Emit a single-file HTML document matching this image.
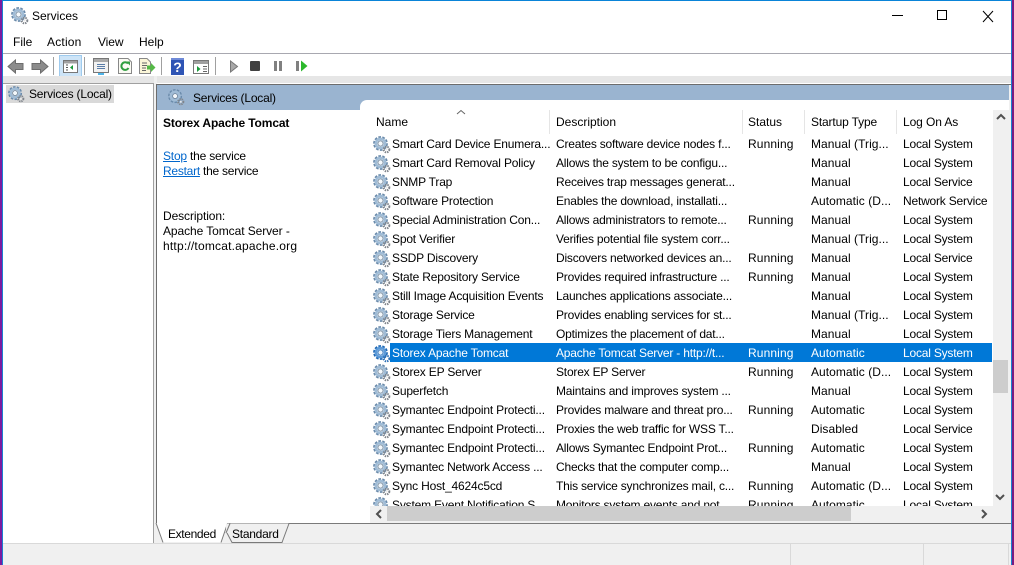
<!DOCTYPE html>
<html><head><meta charset="utf-8"><style>
html,body{margin:0;padding:0}
body{width:1014px;height:565px;position:relative;overflow:hidden;background:#fff;font:12px/17px "Liberation Sans",sans-serif;color:#000}
div,span,a,svg{position:absolute;display:block}
.t{white-space:nowrap}
.r{left:370px;width:622px;height:19px}
.r span{top:2px;white-space:nowrap}
.r svg{left:3px;top:2px}
.n{left:22px;letter-spacing:-.18px}.d{left:186px;letter-spacing:-.2px}.s{left:378px;letter-spacing:.12px}.u{left:441px;letter-spacing:.05px}.l{left:533px;letter-spacing:-.2px}
.sel{background:#0078d7;color:#fff;left:390px;width:602px;top:0;height:19px}
.h{top:114px;white-space:nowrap}
.dv{top:110px;width:1px;height:24px;background:#e5e5e5}
a{color:#0066cc;text-decoration:underline;position:static;display:inline}
</style></head><body>
<svg width="0" height="0" style="left:0;top:0"><defs>
<symbol id="g" viewBox="0 0 18 18">
<circle cx="7.500" cy="7.500" r="5.800" fill="none" stroke="#6a8aaa" stroke-width="3.200" stroke-dasharray="2.400 1.200"/>
<circle cx="7.500" cy="7.500" r="4.600" fill="none" stroke="#a0bcd6" stroke-width="2.600"/>
<circle cx="7.500" cy="7.500" r="2.600" fill="#f4f8fb" stroke="#6f8499" stroke-width=".8"/>
<circle cx="13.500" cy="13.500" r="2.800" fill="none" stroke="#7f848b" stroke-width="2" stroke-dasharray="1.400 .9"/>
<circle cx="13.500" cy="13.500" r="1" fill="#e8e8e8"/>
</symbol>
<symbol id="gs" viewBox="0 0 18 18">
<circle cx="7.500" cy="7.500" r="5.800" fill="none" stroke="#1f68b4" stroke-width="3.200" stroke-dasharray="2.400 1.200"/>
<circle cx="7.500" cy="7.500" r="4.600" fill="none" stroke="#5c9ad8" stroke-width="2.600"/>
<circle cx="7.500" cy="7.500" r="2.600" fill="#e8f2fb" stroke="#1f68b4" stroke-width=".8"/>
<circle cx="13.500" cy="13.500" r="2.800" fill="none" stroke="#2c6fb5" stroke-width="2" stroke-dasharray="1.400 .9"/>
</symbol>
</defs></svg>

<!-- window frame -->
<div style="left:0;top:0;width:1014px;height:1px;background:#0a84d8"></div>
<div style="left:0;top:0;width:2px;height:565px;background:#7a1aa0"></div>
<div style="left:2px;top:0;width:1px;height:565px;background:#1a7fd0"></div>
<div style="left:1011px;top:0;width:1px;height:565px;background:#1a7fd0"></div>
<div style="left:1012px;top:0;width:2px;height:565px;background:#7a1a80"></div>

<!-- title bar -->
<svg style="left:11px;top:7px" width="18" height="18"><use href="#g"/></svg>
<div class="t" style="left:32px;top:8px">Services</div>
<svg style="left:890px;top:8px" width="105" height="16" fill="none" stroke="#000" stroke-width="1">
<path d="M2 7.500H13"/><rect x="47.500" y="2.500" width="9" height="9"/><path d="M93 3L103 14M103 3L93 14"/></svg>

<!-- menu -->
<div class="t" style="left:13px;top:34px">File</div>
<div class="t" style="left:47px;top:34px;letter-spacing:.2px">Action</div>
<div class="t" style="left:98px;top:34px;letter-spacing:-.1px">View</div>
<div class="t" style="left:139px;top:34px">Help</div>
<div style="left:3px;top:53px;width:1008px;height:1px;background:#a8a8b0"></div>

<!-- toolbar -->
<svg style="left:7px;top:58px" width="42" height="17">
<path d="M1 8.500L8.500 2V5.500H16V11.500H8.500V15Z" fill="#8c8c8c" stroke="#6d6d6d"/>
<path d="M41 8.500L33.500 2V5.500H25V11.500H33.500V15Z" fill="#8c8c8c" stroke="#6d6d6d"/></svg>
<div style="left:53px;top:57px;width:1px;height:18px;background:#a0a0a0"></div>
<div style="left:59px;top:55px;width:21px;height:20px;background:#cde4f7;border:1px solid #9fcbee"></div>
<svg style="left:63px;top:60px" width="16" height="14">
<rect x=".5" y=".5" width="14" height="12" fill="#fff" stroke="#777"/><rect x="1" y="1" width="13" height="2.500" fill="#a0a0a0"/>
<path d="M10 5V10L7 7.500Z" fill="#1a9a3a"/><path d="M3 5H5M3 7.500H5M3 10H5" stroke="#555"/></svg>
<div style="left:84px;top:57px;width:1px;height:18px;background:#a0a0a0"></div>
<svg style="left:93px;top:58px" width="16" height="17">
<rect x=".5" y=".5" width="15" height="14" fill="#f2f2f2" stroke="#777"/><rect x="1" y="1" width="14" height="3" fill="#aaa"/>
<path d="M4 6.500H12M4 8.500H12M4 10.500H12" stroke="#5a7da8"/><rect x="5" y="15" width="6" height="2" fill="#4fb4e8"/></svg>
<svg style="left:118px;top:58px" width="14" height="16">
<path d="M.5.5H10L13.500 4V15.500H.5Z" fill="#fbfbf4" stroke="#888"/>
<path d="M10 5.500A3.800 3.800 0 1 0 10.500 10" fill="none" stroke="#2f9e3f" stroke-width="2"/><path d="M8 3.500L12 3.500V7.500Z" fill="#2f9e3f"/></svg>
<svg style="left:139px;top:58px" width="17" height="16">
<path d="M.5.5H8L11.500 4V15.500H.5Z" fill="#fbf6d8" stroke="#888"/><path d="M3 5H8M3 7.500H8M3 10H7M3 12.500H7" stroke="#666"/>
<path d="M8 7.500H12V5L16.500 9.500L12 14V11.500H8Z" fill="#55b947"/></svg>
<div style="left:161px;top:57px;width:1px;height:18px;background:#a0a0a0"></div>
<svg style="left:171px;top:58px" width="14" height="17"><rect width="13" height="17" fill="#2f55b5"/><rect x="0" y="0" width="13" height="2" fill="#6f8ad8"/><text x="6.500" y="14" font-family="Liberation Sans" font-weight="bold" font-size="14" fill="#fff" text-anchor="middle">?</text></svg>
<svg style="left:193px;top:60px" width="16" height="14">
<rect x=".5" y=".5" width="15" height="13" fill="#fff" stroke="#777"/><rect x="1" y="1" width="14" height="3" fill="#a0a0a0"/>
<path d="M4 6V12L7.500 9Z" fill="#1a9a3a"/><path d="M10 6.500H14M10 9H14M10 11.500H14" stroke="#666"/></svg>
<div style="left:215px;top:57px;width:1px;height:18px;background:#a0a0a0"></div>
<svg style="left:229px;top:60px" width="10" height="13"><path d="M1.500 1V12L8.500 6.500Z" fill="#a8a8a8" stroke="#777"/></svg>
<div style="left:250px;top:61px;width:10px;height:10px;background:#404040;border-radius:1px"></div>
<div style="left:274px;top:61px;width:3px;height:10px;background:#808080"></div>
<div style="left:279px;top:61px;width:3px;height:10px;background:#808080"></div>
<svg style="left:296px;top:60px" width="12" height="13"><rect x="0" y="1" width="3" height="10" fill="#808080"/><path d="M5 .5V11.500L11.500 6Z" fill="#2cb82c"/></svg>

<!-- gray gutter -->
<div style="left:3px;top:76px;width:1008px;height:7px;background:#e6e6e6"></div>
<div style="left:154px;top:76px;width:3px;height:450px;background:#f0f0f0"></div>

<!-- left tree -->
<div style="left:3px;top:83px;width:150px;height:459px;background:#fff;border:solid #a0a0a0;border-width:1px 1px 1px 0"></div>
<div style="left:6px;top:85px;width:108px;height:18px;background:#d9d9d9"></div>
<svg style="left:8px;top:86px" width="17" height="17"><use href="#g"/></svg>
<div class="t" style="left:29px;top:86px;letter-spacing:-.2px">Services (Local)</div>

<!-- middle panel -->
<div style="left:156px;top:84px;width:855px;height:439px;background:#fff"></div>
<div style="left:156px;top:84px;width:855px;height:1px;background:#6d6d6d"></div>
<div style="left:156px;top:84px;width:1px;height:439px;background:#6d6d6d"></div>
<div style="left:157px;top:85px;width:852px;height:25px;background:#9ab4d0"></div>
<svg style="left:168px;top:89px" width="17" height="17"><use href="#g"/></svg>
<div class="t" style="left:193px;top:90px;letter-spacing:-.2px">Services (Local)</div>
<div style="left:360px;top:100px;width:649px;height:30px;background:#fff;border-radius:7px 0 0 0"></div>
<div style="left:1009px;top:85px;width:2px;height:438px;background:#f0f0f0"></div>

<div class="t" style="left:163px;top:115px;font-weight:bold;letter-spacing:-.12px">Storex Apache Tomcat</div>
<div class="t" style="left:163px;top:148px;letter-spacing:-.2px"><a>Stop</a> the service</div>
<div class="t" style="left:163px;top:163px;letter-spacing:-.25px"><a>Restart</a> the service</div>
<div class="t" style="left:163px;top:208px;letter-spacing:-.1px">Description:</div>
<div class="t" style="left:163px;top:223px;letter-spacing:-.08px">Apache Tomcat Server -</div>
<div class="t" style="left:163px;top:238px;letter-spacing:.2px">http://tomcat.apache.org</div>

<!-- list header -->
<div class="h" style="left:376px">Name</div>
<div class="h" style="left:556px">Description</div>
<div class="h" style="left:748px">Status</div>
<div class="h" style="left:811px;letter-spacing:-.15px">Startup Type</div>
<div class="h" style="left:903px;letter-spacing:-.1px">Log On As</div>
<div class="dv" style="left:549px"></div><div class="dv" style="left:742px"></div><div class="dv" style="left:804px"></div><div class="dv" style="left:896px"></div>
<svg style="left:456px;top:109px" width="10" height="6" fill="none" stroke="#666"><path d="M1 5L5 1.500L9 5"/></svg>

<!-- rows -->
<div style="left:370px;top:134px;width:622px;height:372px;overflow:hidden">
<div class="r" style="left:0;top:0"><svg width="18" height="18"><use href="#g"/></svg><span class="n">Smart Card Device Enumera...</span><span class="d">Creates software device nodes f...</span><span class="s">Running</span><span class="u">Manual (Trig...</span><span class="l">Local System</span></div>
<div class="r" style="left:0;top:19px"><svg width="18" height="18"><use href="#g"/></svg><span class="n">Smart Card Removal Policy</span><span class="d">Allows the system to be configu...</span><span class="u">Manual</span><span class="l">Local System</span></div>
<div class="r" style="left:0;top:38px"><svg width="18" height="18"><use href="#g"/></svg><span class="n">SNMP Trap</span><span class="d">Receives trap messages generat...</span><span class="u">Manual</span><span class="l">Local Service</span></div>
<div class="r" style="left:0;top:57px"><svg width="18" height="18"><use href="#g"/></svg><span class="n">Software Protection</span><span class="d">Enables the download, installati...</span><span class="u">Automatic (D...</span><span class="l">Network Service</span></div>
<div class="r" style="left:0;top:76px"><svg width="18" height="18"><use href="#g"/></svg><span class="n">Special Administration Con...</span><span class="d">Allows administrators to remote...</span><span class="s">Running</span><span class="u">Manual</span><span class="l">Local System</span></div>
<div class="r" style="left:0;top:95px"><svg width="18" height="18"><use href="#g"/></svg><span class="n">Spot Verifier</span><span class="d">Verifies potential file system corr...</span><span class="u">Manual (Trig...</span><span class="l">Local System</span></div>
<div class="r" style="left:0;top:114px"><svg width="18" height="18"><use href="#g"/></svg><span class="n">SSDP Discovery</span><span class="d">Discovers networked devices an...</span><span class="s">Running</span><span class="u">Manual</span><span class="l">Local Service</span></div>
<div class="r" style="left:0;top:133px"><svg width="18" height="18"><use href="#g"/></svg><span class="n">State Repository Service</span><span class="d">Provides required infrastructure ...</span><span class="s">Running</span><span class="u">Manual</span><span class="l">Local System</span></div>
<div class="r" style="left:0;top:152px"><svg width="18" height="18"><use href="#g"/></svg><span class="n">Still Image Acquisition Events</span><span class="d">Launches applications associate...</span><span class="u">Manual</span><span class="l">Local System</span></div>
<div class="r" style="left:0;top:171px"><svg width="18" height="18"><use href="#g"/></svg><span class="n">Storage Service</span><span class="d">Provides enabling services for st...</span><span class="u">Manual (Trig...</span><span class="l">Local System</span></div>
<div class="r" style="left:0;top:190px"><svg width="18" height="18"><use href="#g"/></svg><span class="n">Storage Tiers Management</span><span class="d">Optimizes the placement of dat...</span><span class="u">Manual</span><span class="l">Local System</span></div>
<div class="r" style="left:0;top:209px"><div class="sel" style="left:20px"></div><svg width="18" height="18"><use href="#gs"/></svg><span class="n" style="color:#fff">Storex Apache Tomcat</span><span class="d" style="color:#fff">Apache Tomcat Server - http://t...</span><span class="s" style="color:#fff">Running</span><span class="u" style="color:#fff">Automatic</span><span class="l" style="color:#fff">Local System</span></div>
<div class="r" style="left:0;top:228px"><svg width="18" height="18"><use href="#g"/></svg><span class="n">Storex EP Server</span><span class="d">Storex EP Server</span><span class="s">Running</span><span class="u">Automatic (D...</span><span class="l">Local System</span></div>
<div class="r" style="left:0;top:247px"><svg width="18" height="18"><use href="#g"/></svg><span class="n">Superfetch</span><span class="d">Maintains and improves system ...</span><span class="u">Manual</span><span class="l">Local System</span></div>
<div class="r" style="left:0;top:266px"><svg width="18" height="18"><use href="#g"/></svg><span class="n">Symantec Endpoint Protecti...</span><span class="d">Provides malware and threat pro...</span><span class="s">Running</span><span class="u">Automatic</span><span class="l">Local System</span></div>
<div class="r" style="left:0;top:285px"><svg width="18" height="18"><use href="#g"/></svg><span class="n">Symantec Endpoint Protecti...</span><span class="d">Proxies the web traffic for WSS T...</span><span class="u">Disabled</span><span class="l">Local Service</span></div>
<div class="r" style="left:0;top:304px"><svg width="18" height="18"><use href="#g"/></svg><span class="n">Symantec Endpoint Protecti...</span><span class="d">Allows Symantec Endpoint Prot...</span><span class="s">Running</span><span class="u">Automatic</span><span class="l">Local System</span></div>
<div class="r" style="left:0;top:323px"><svg width="18" height="18"><use href="#g"/></svg><span class="n">Symantec Network Access ...</span><span class="d">Checks that the computer comp...</span><span class="u">Manual</span><span class="l">Local System</span></div>
<div class="r" style="left:0;top:342px"><svg width="18" height="18"><use href="#g"/></svg><span class="n">Sync Host_4624c5cd</span><span class="d">This service synchronizes mail, c...</span><span class="s">Running</span><span class="u">Automatic (D...</span><span class="l">Local System</span></div>
<div class="r" style="left:0;top:361px"><svg width="18" height="18"><use href="#g"/></svg><span class="n">System Event Notification S...</span><span class="d">Monitors system events and not...</span><span class="s">Running</span><span class="u">Automatic</span><span class="l">Local System</span></div>
</div>

<!-- vertical scrollbar -->
<div style="left:993px;top:110px;width:16px;height:396px;background:#f0f0f0"></div>
<div style="left:993px;top:360px;width:15px;height:33px;background:#cdcdcd"></div>
<svg style="left:996px;top:113px" width="10" height="8" fill="none" stroke="#505050" stroke-width="2"><path d="M1 6L5 2L9 6"/></svg>
<svg style="left:995px;top:493px" width="10" height="8" fill="none" stroke="#505050" stroke-width="2"><path d="M1 2L5 6L9 2"/></svg>
<!-- horizontal scrollbar -->
<div style="left:370px;top:506px;width:639px;height:17px;background:#f0f0f0"></div>
<div style="left:387px;top:506px;width:464px;height:15px;background:#cdcdcd"></div>
<svg style="left:375px;top:509px" width="8" height="10" fill="none" stroke="#505050" stroke-width="2"><path d="M6 1L2 5L6 9"/></svg>
<svg style="left:980px;top:509px" width="8" height="10" fill="none" stroke="#505050" stroke-width="2"><path d="M2 1L6 5L2 9"/></svg>

<!-- tabs -->
<div style="left:154px;top:523px;width:857px;height:20px;background:#f0f0f0"></div>
<div style="left:225px;top:523px;width:786px;height:1px;background:#7a7a7a"></div>
<svg style="left:155px;top:523px" width="140" height="21">
<path d="M1 0L8 19H66L72 1V0Z" fill="#fff"/>
<path d="M1 0L8 19.500M66 19.500L72 2" fill="none" stroke="#7a7a7a"/>
<path d="M71 .5L71 10L77 19.500H127L134 .5" fill="#f0f0f0" stroke="none"/>
<path d="M71 10L75 .5M72 10L77 19.500H127L134 .5" fill="none" stroke="#7a7a7a"/>
</svg>
<div class="t" style="left:168px;top:526px;letter-spacing:-.35px">Extended</div>
<div class="t" style="left:232px;top:526px;letter-spacing:-.25px">Standard</div>

<!-- status bar -->
<div style="left:3px;top:543px;width:1008px;height:22px;background:#f0f0f0"></div>
<div style="left:3px;top:543px;width:1008px;height:1px;background:#d9d9d9"></div>
<div style="left:790px;top:544px;width:1px;height:21px;background:#d9d9d9"></div>
<div style="left:923px;top:544px;width:1px;height:21px;background:#d9d9d9"></div>
<div style="left:1008px;top:544px;width:1px;height:21px;background:#d9d9d9"></div>
</body></html>
